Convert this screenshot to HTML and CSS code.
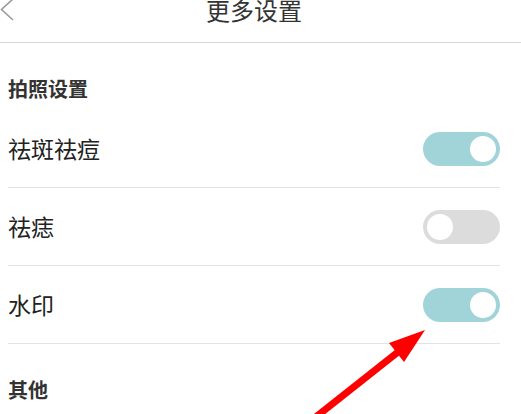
FILE: index.html
```html
<!DOCTYPE html>
<html lang="zh-CN">
<head>
<meta charset="utf-8">
<title>更多设置</title>
<link rel="stylesheet" href="styles.css">
</head>
<body>
<div class="page">
  <header class="topbar">
    <svg class="back" width="14" height="22" viewBox="0 0 14 22"><polyline points="13,0 1.5,10.5 13,21" fill="none" stroke="#9a9a9a" stroke-width="1.6"/></svg>
    <h1 class="title">更多设置</h1>
  </header>
  <main class="content">
    <h2 class="section">拍照设置</h2>
    <div class="row"><span class="label">祛斑祛痘</span><span class="toggle on"><span class="knob"></span></span></div>
    <div class="row"><span class="label">祛痣</span><span class="toggle"><span class="knob"></span></span></div>
    <div class="row"><span class="label">水印</span><span class="toggle on"><span class="knob"></span></span></div>
    <h2 class="section">其他</h2>
  </main>
  <svg class="arrow" width="521" height="414" viewBox="0 0 521 414">
    <line x1="312" y1="420" x2="398" y2="352" stroke="#ff0000" stroke-width="7"/>
    <polygon points="425,330 389,343 404,362" fill="#ff0000"/>
  </svg>
</div>
</body>
</html>
```
FILE: styles.css
```css
html, body {
  margin: 0;
  padding: 0;
  background: #ffffff;
}
.page {
  position: relative;
  width: 521px;
  height: 414px;
  overflow: hidden;
  font-family: "Noto Sans CJK SC", "Noto Sans", sans-serif;
}
.topbar {
  position: relative;
  height: 42px;
  border-bottom: 1px solid #d6d6d6;
  display: flex;
  justify-content: center;
  align-items: flex-start;
}
.back {
  position: absolute;
  left: 0;
  top: -1px;
}
.title {
  margin: -2px 0 0 -13px;
  font-size: 24px;
  line-height: 24px;
  font-weight: normal;
  color: #333333;
}
.content {
  padding: 0 21px 0 8px;
}
.section {
  margin: 0;
  padding: 35px 0 11px 0;
  font-size: 20px;
  line-height: 21px;
  font-weight: bold;
  color: #333333;
}
.row {
  height: 77px;
  border-bottom: 1px solid #e3e3e3;
  display: flex;
  align-items: center;
  justify-content: space-between;
}
.label {
  font-size: 23px;
  line-height: 23px;
  color: #222222;
}
.toggle {
  width: 77px;
  height: 34px;
  border-radius: 17px;
  background: #dcdcdc;
  display: flex;
  align-items: center;
  padding: 0 4px;
  box-sizing: border-box;
  justify-content: flex-start;
}
.toggle.on {
  background: #a0d4d8;
  justify-content: flex-end;
}
.knob {
  width: 26px;
  height: 26px;
  border-radius: 50%;
  background: #ffffff;
}
.arrow {
  position: absolute;
  left: 0;
  top: 0;
}
```
